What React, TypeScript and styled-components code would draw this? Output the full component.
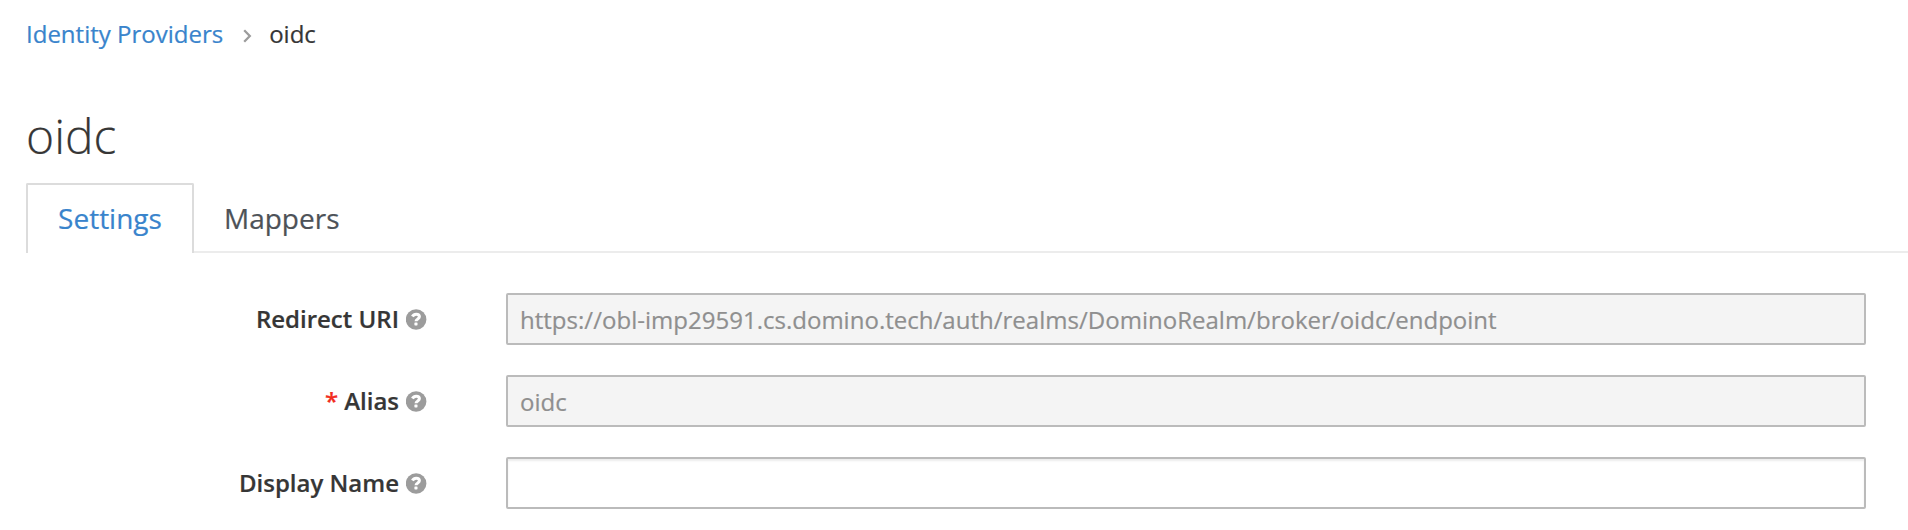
import React from "react";
import styled, { createGlobalStyle } from "styled-components";

const Global = createGlobalStyle`
  * { box-sizing: border-box; }
  body { margin: 0; background: #fff; color: #363636; font-family: "Open Sans", sans-serif; font-size: 24px; overflow: hidden; -webkit-text-stroke: 0.2px; }
`;
const Page = styled.main`
  padding: 18px 0 0 26px;
  height: 530px;
`;
const Crumbs = styled.nav`
  display: flex;
  align-items: center;
  height: 32px;
  line-height: 32px;
`;
const CrumbLink = styled.a`
  color: #3984cc;
`;
const Chevron = styled.svg`
  width: 10px;
  height: 14px;
  margin: 3px 17px 0 19px;
`;
const Title = styled.h1`
  margin: 51px 0 0;
  height: 82px;
  line-height: 70px;
  font-size: 48px;
  font-weight: 300;
`;
const Tabs = styled.div`
  display: flex;
  height: 70px;
  border-bottom: 2px solid #ececec;
`;
const Tab = styled.button<{ $active?: boolean }>`
  height: ${p => (p.$active ? 70 : 68)}px;
  width: ${p => (p.$active ? "168px" : "auto")};
  padding: ${p => (p.$active ? "0 0 2px" : "0 28px")};
  font: 28px "Open Sans", sans-serif;
  background: #fff;
  color: ${p => (p.$active ? "#3984cc" : "#4d5258")};
  border: 2px solid ${p => (p.$active ? "#dcdcdc" : "transparent")};
  border-bottom: 0;
  border-radius: 2px 2px 0 0;
`;
const Form = styled.form`
  padding-top: 40px;
`;
const Row = styled.div`
  display: flex;
  height: 82px;
`;
const Label = styled.label`
  width: 401px;
  height: 52px;
  padding-bottom: 1px;
  display: flex;
  justify-content: flex-end;
  align-items: center;
  gap: 7px;
  font-weight: 600;
`;
const Star = styled.span`
  margin-right: -1px;
  color: #f22d1f;
`;
const HelpSvg = styled.svg`
  width: 21px;
  height: 21px;
  margin-top: 1px;
`;
const Field = styled.input`
  width: 1360px;
  height: 52px;
  margin-left: 79px;
  padding: 1px 12px 0;
  border: 2px solid #bbb;
  border-radius: 2px;
  font: 24px "Open Sans", sans-serif;
  letter-spacing: 0.015px;
  color: #363636;
  background: #fff;
  box-shadow: inset 0 2px 2px rgba(3, 3, 3, 0.075);
  &:disabled {
    color: #8f8f8f;
    background: #f4f4f4;
    box-shadow: none;
  }
`;

function Help() {
  return (
    <HelpSvg viewBox="0 0 21 21">
      <circle cx="10.1" cy="10.5" r="10.3" fill="#9c9c9c" />
      <path d="M6.4 7.5C7.4 5.7 8.6 5.2 10.2 5.2c1.9 0 3.2 1 3.2 2.6 0 2.2-3.3 2-3.4 4.4" fill="none" stroke="#fff" strokeWidth="3" />
      <rect x="8.4" y="13.4" width="3.1" height="3" rx="0.6" fill="#fff" />
    </HelpSvg>
  );
}

export default function App() {
  return (
    <>
      <Global />
      <Page>
        <Crumbs>
          <CrumbLink>Identity Providers</CrumbLink>
          <Chevron viewBox="0 0 10 14">
            <path d="M2.2 1.3l5.6 5.7-5.6 5.7" fill="none" stroke="#9c9c9c" strokeWidth="2.3" />
          </Chevron>
          <span>oidc</span>
        </Crumbs>
        <Title>oidc</Title>
        <Tabs>
          <Tab $active>Settings</Tab>
          <Tab>Mappers</Tab>
        </Tabs>
        <Form>
          <Row>
            <Label>Redirect URI<Help /></Label>
            <Field disabled defaultValue="https://obl-imp29591.cs.domino.tech/auth/realms/DominoRealm/broker/oidc/endpoint" />
          </Row>
          <Row>
            <Label><Star>*</Star>Alias<Help /></Label>
            <Field disabled defaultValue="oidc" />
          </Row>
          <Row>
            <Label>Display Name<Help /></Label>
            <Field />
          </Row>
        </Form>
      </Page>
    </>
  );
}
